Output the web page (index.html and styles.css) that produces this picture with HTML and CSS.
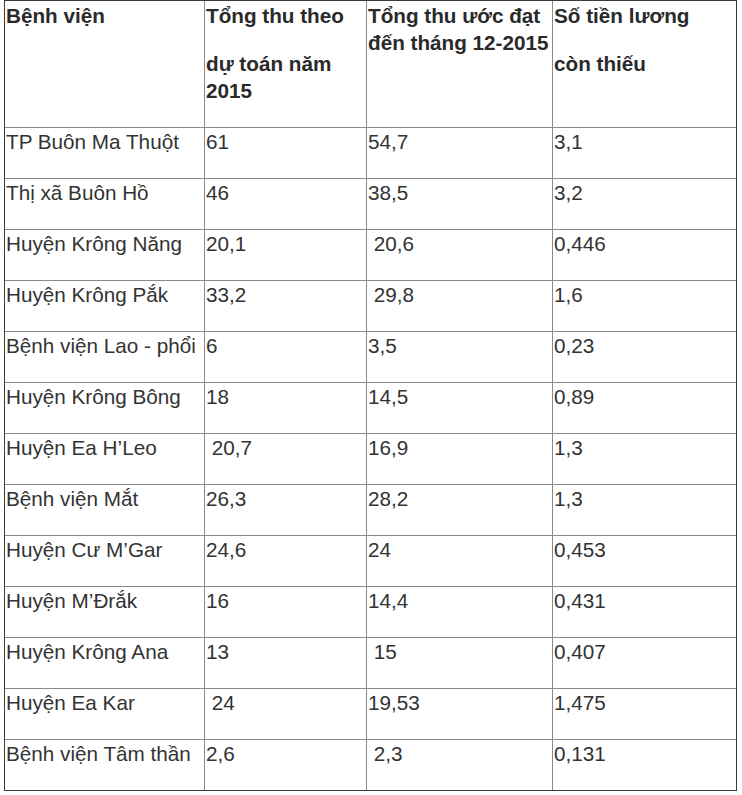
FILE: index.html
```html
<!DOCTYPE html>
<html lang="vi">
<head>
<meta charset="utf-8">
<title>Bảng tổng thu</title>
<link rel="stylesheet" href="styles.css">
</head>
<body>
<table class="data">
  <thead>
    <tr>
      <th class="c1"><p>Bệnh viện</p></th>
      <th class="c2"><p>Tổng thu theo</p><p>dự toán năm 2015</p></th>
      <th class="c3"><p>Tổng thu ước đạt đến tháng 12-2015</p></th>
      <th class="c4"><p>Số tiền lương</p><p>còn thiếu</p></th>
    </tr>
  </thead>
  <tbody>
    <tr><td><p>TP Buôn Ma Thuột</p></td><td><p>61</p></td><td><p>54,7</p></td><td><p>3,1</p></td></tr>
    <tr><td><p>Thị xã Buôn Hồ</p></td><td><p>46</p></td><td><p>38,5</p></td><td><p>3,2</p></td></tr>
    <tr><td><p>Huyện Krông Năng</p></td><td><p>20,1</p></td><td><p>&nbsp;20,6</p></td><td><p>0,446</p></td></tr>
    <tr><td><p>Huyện Krông Pắk</p></td><td><p>33,2</p></td><td><p>&nbsp;29,8</p></td><td><p>1,6</p></td></tr>
    <tr><td><p>Bệnh viện Lao - phổi</p></td><td><p>6</p></td><td><p>3,5</p></td><td><p>0,23</p></td></tr>
    <tr><td><p>Huyện Krông Bông</p></td><td><p>18</p></td><td><p>14,5</p></td><td><p>0,89</p></td></tr>
    <tr><td><p>Huyện Ea H’Leo</p></td><td><p>&nbsp;20,7</p></td><td><p>16,9</p></td><td><p>1,3</p></td></tr>
    <tr><td><p>Bệnh viện Mắt</p></td><td><p>26,3</p></td><td><p>28,2</p></td><td><p>1,3</p></td></tr>
    <tr><td><p>Huyện Cư M’Gar</p></td><td><p>24,6</p></td><td><p>24</p></td><td><p>0,453</p></td></tr>
    <tr><td><p>Huyện M’Đrắk</p></td><td><p>16</p></td><td><p>14,4</p></td><td><p>0,431</p></td></tr>
    <tr><td><p>Huyện Krông Ana</p></td><td><p>13</p></td><td><p>&nbsp;15</p></td><td><p>0,407</p></td></tr>
    <tr><td><p>Huyện Ea Kar</p></td><td><p>&nbsp;24</p></td><td><p>19,53</p></td><td><p>1,475</p></td></tr>
    <tr><td><p>Bệnh viện Tâm thần</p></td><td><p>2,6</p></td><td><p>&nbsp;2,3</p></td><td><p>0,131</p></td></tr>
  </tbody>
</table>
</body>
</html>
```
FILE: styles.css
```css
html, body {
  margin: 0;
  padding: 0;
  background: #ffffff;
}

body {
  font-family: "Liberation Sans", Arial, sans-serif;
  font-size: 20.7px;
  line-height: 27px;
  color: #333333;
}

.data {
  margin-left: 4px;
  width: 733px;
  table-layout: fixed;
  border-collapse: separate;
  border-spacing: 0;
  border: 1px solid #3a3a3a;
}

.data th,
.data td {
  box-sizing: border-box;
  vertical-align: top;
  text-align: left;
  padding: 0 1px 2px 1px;
  border-right: 1px solid #8a8a8a;
  border-bottom: 1px solid #8a8a8a;
  white-space: normal;
}

.data th:last-child,
.data td:last-child {
  border-right: none;
}

.data tbody tr:last-child td {
  border-bottom: none;
}

.data th {
  font-weight: bold;
  color: #2a2a2a;
  padding-top: 1px;
}

.data p {
  margin: 0 0 21px 0;
}

.c1 { width: 200px; }
.c2 { width: 162px; }
.c3 { width: 186px; }
.c4 { width: 183px; }
```
